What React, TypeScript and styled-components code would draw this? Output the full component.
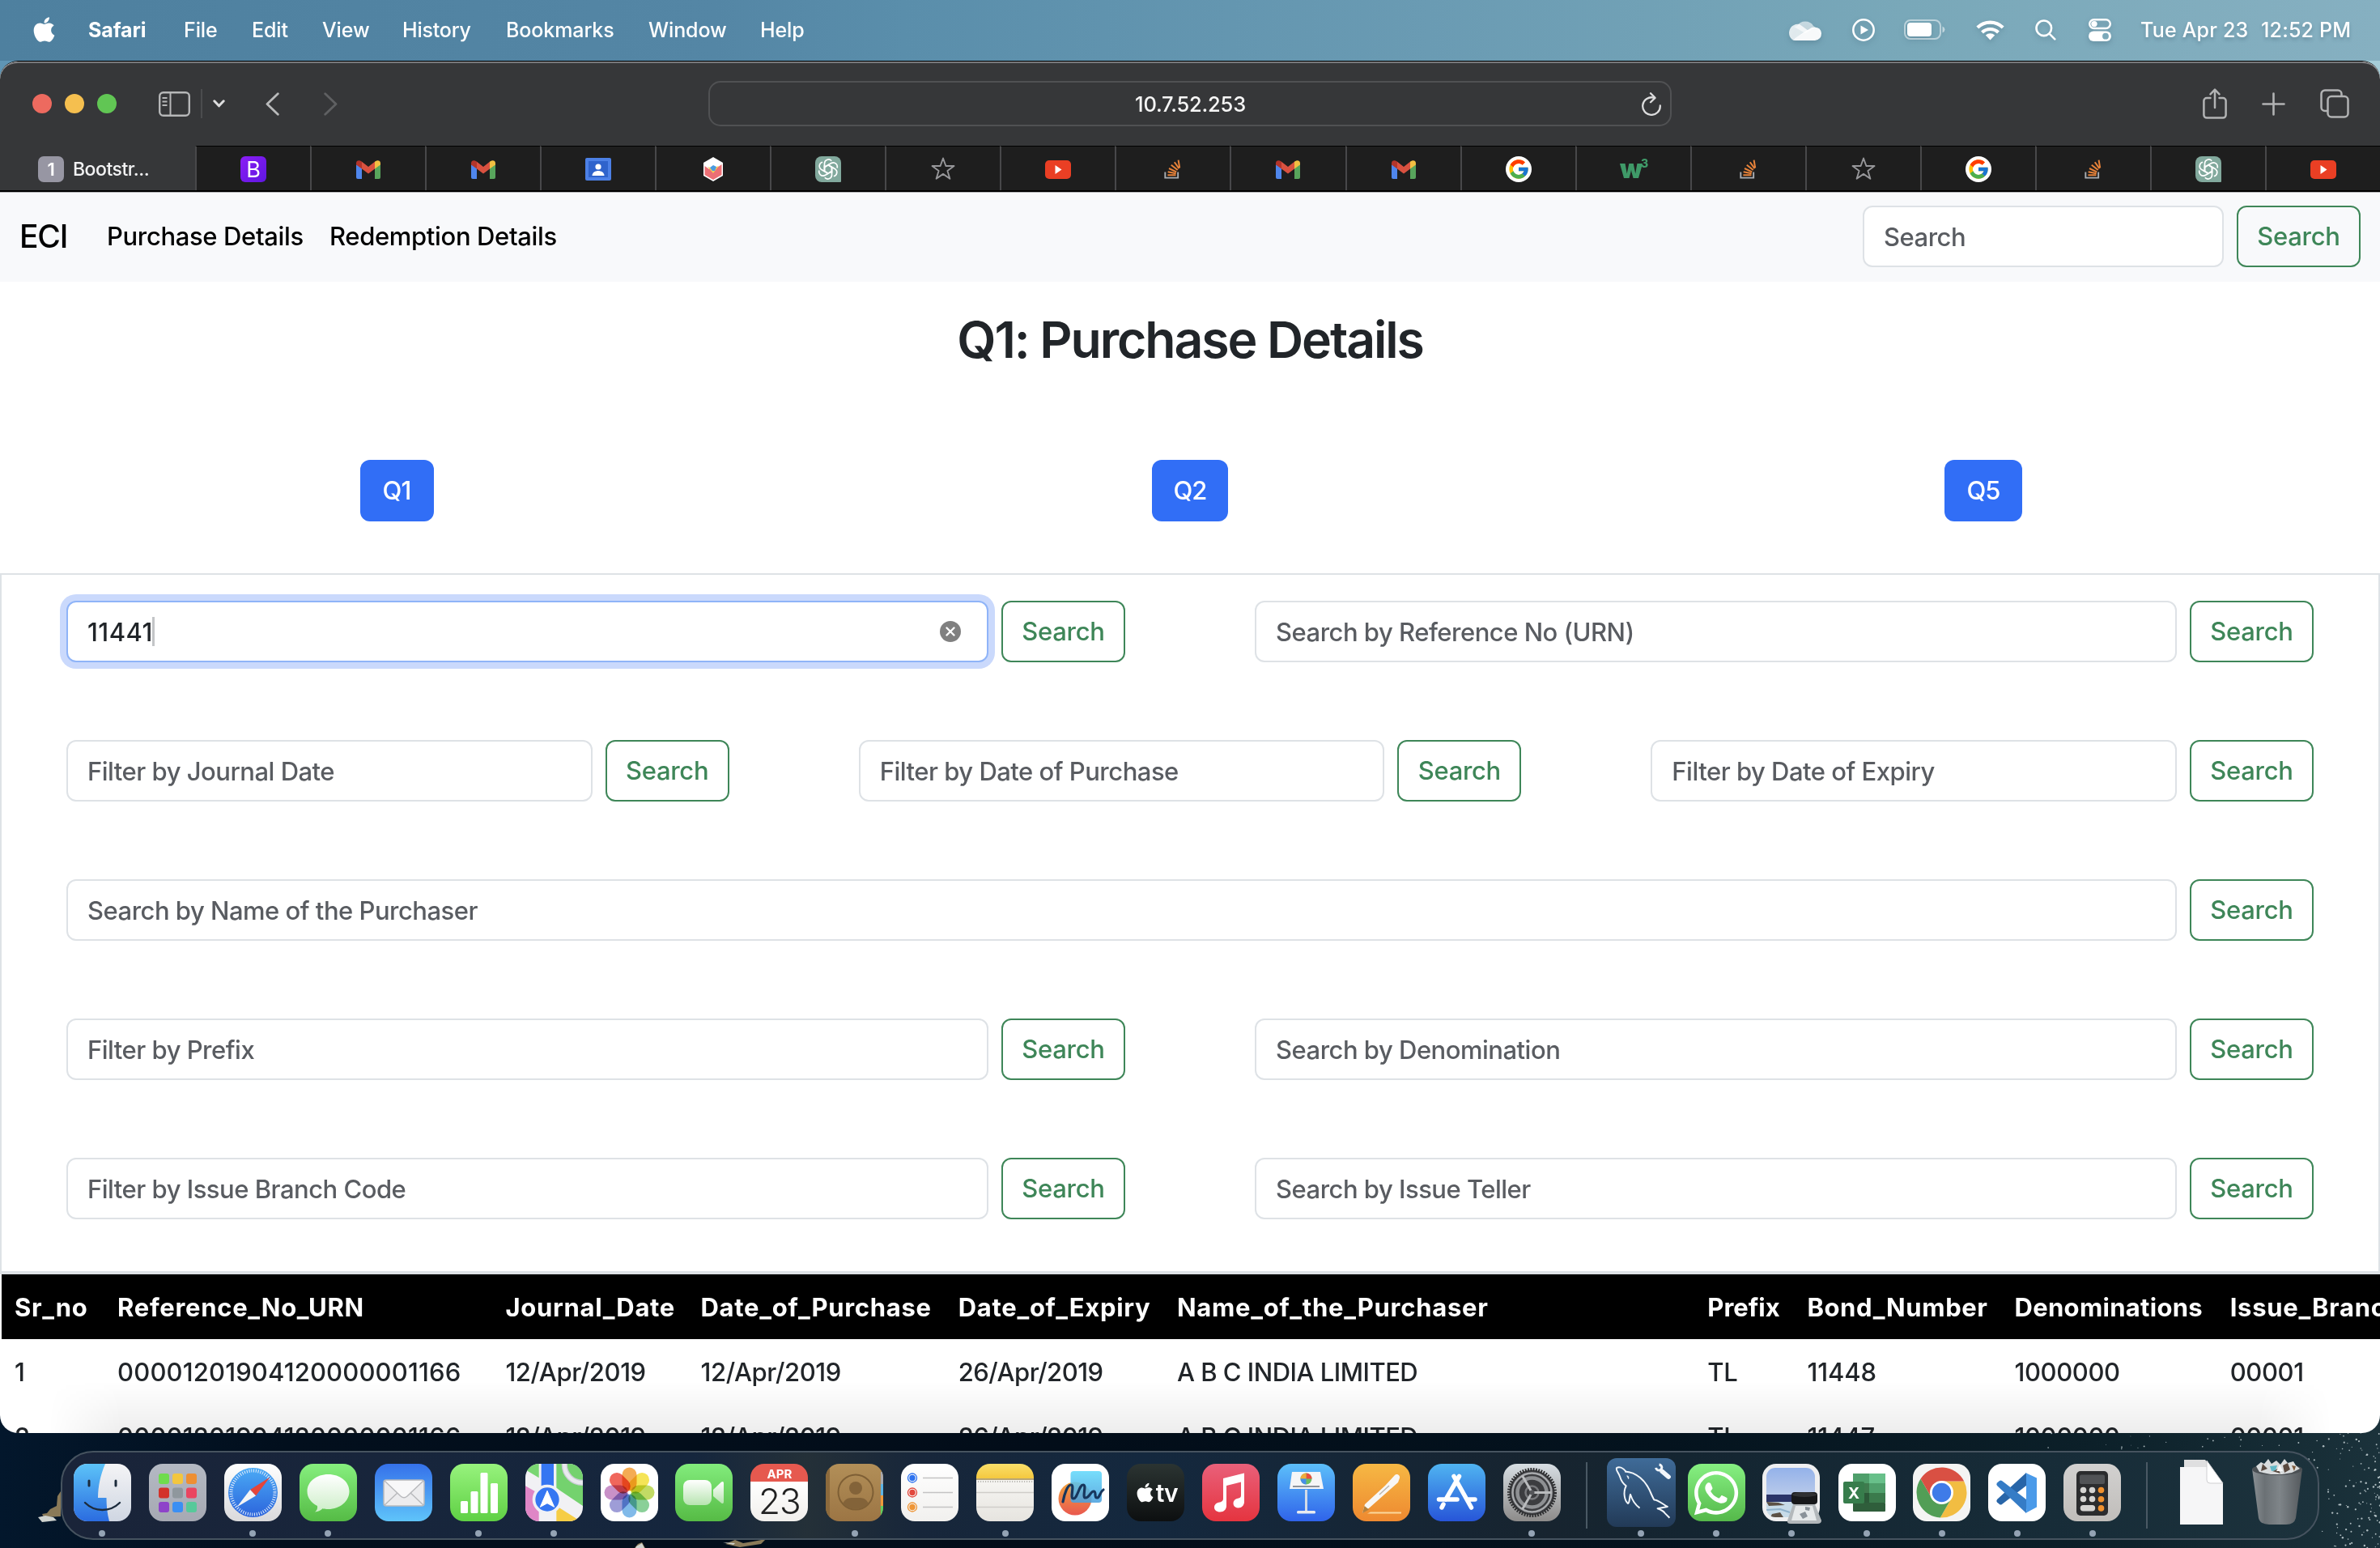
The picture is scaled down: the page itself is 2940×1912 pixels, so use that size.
import React from 'react';
import styled, { createGlobalStyle, css } from 'styled-components';
import { FaApple, FaWhatsapp } from 'react-icons/fa';
import { FcGoogle } from 'react-icons/fc';

const Global = createGlobalStyle`
  * { box-sizing: border-box; }
  html, body { margin: 0; padding: 0; }
  body { width: 2940px; height: 1912px; overflow: hidden; font-family: Inter, "Noto Sans", sans-serif; }
  svg { display: block; }
`;

/* ---------- desktop ---------- */

const Desktop = styled.div`
  position: relative;
  width: 2940px;
  height: 1912px;
  display: flex;
  flex-direction: column;
  overflow: hidden;
  background:
    linear-gradient(90deg, #5f95b5 0%, #6fa6bf 50%, #a5cdd8 100%) top / 100% 200px no-repeat,
    linear-gradient(90deg, #03172c 0%, #020f1d 12%, #020d19 45%, #04131e 70%, #0c2029 88%, #1b323b 100%);
`;

const Wallpaper = styled.svg`
  position: absolute;
  left: 0;
  top: 1770px;
`;

const MenuBar = styled.header`
  height: 75px;
  flex: none;
  display: flex;
  align-items: center;
  justify-content: space-between;
  padding: 0 34px 2px 37px;
  background: linear-gradient(90deg, #4e809f 0%, #5486a5 30%, #5a8eab 38%, #6a9bb3 60%, #79a8b9 80%, #86b0c1 100%);
  color: #fff;
  font-size: 25px;
  font-weight: 500;
  letter-spacing: -0.1px;
`;

const MenuGroup = styled.div`
  display: flex;
  align-items: center;
  white-space: nowrap;
`;

const StatusGroup = styled(MenuGroup)`
  svg { filter: drop-shadow(0 3px 3px rgba(40, 70, 90, 0.25)); }
`;

const MenuItem = styled.span<{ $w: number; $bold?: boolean; $track?: number }>`
  width: ${p => p.$w}px;
  margin-right: 44px;
  font-weight: ${p => (p.$bold ? 700 : 500)};
  letter-spacing: ${p => p.$track ?? -0.1}px;
`;

const Gap = styled.span<{ $w: number }>`
  width: ${p => p.$w}px;
  flex: none;
`;

const Clock = styled.span<{ $w: number; $track: number }>`
  width: ${p => p.$w}px;
  letter-spacing: ${p => p.$track}px;
  text-shadow: 0 3px 4px rgba(40, 70, 90, 0.3);
`;

/* ---------- browser ---------- */

const Browser = styled.main`
  position: relative;
  height: 1695px;
  flex: none;
  display: flex;
  flex-direction: column;
  overflow: hidden;
  border-radius: 22px;
  border-top: 1px solid #000;
  background: #fff;
`;

const Toolbar = styled.div`
  height: 104px;
  flex: none;
  display: flex;
  align-items: center;
  padding: 0 38px 2px 40px;
  background: #363739;
  border-top: 2px solid #77777a;
  border-radius: 22px 22px 0 0;
`;

const Light = styled.span<{ $c: string }>`
  width: 24px;
  height: 24px;
  margin-right: 16px;
  border-radius: 50%;
  background: ${p => p.$c};
`;

const ToolDivider = styled.span`
  width: 2px;
  height: 36px;
  margin: 0 13px;
  background: #4b4c4e;
`;

const Address = styled.div`
  width: 1190px;
  height: 56px;
  display: flex;
  align-items: center;
  justify-content: flex-end;
  padding-right: 10px;
  border: 2px solid #505153;
  border-radius: 15px;
  color: #f5f5f5;
  font-size: 25.5px;
  font-weight: 500;
  letter-spacing: -0.2px;
`;

const AddressText = styled.span`
  flex: 1;
  padding-left: 37px;
  text-align: center;
`;

const Tabs = styled.div`
  height: 57px;
  flex: none;
  display: grid;
  grid-template-columns: 241px repeat(19, 1fr);
  border-bottom: 2px solid #000;
`;

const ActiveTab = styled.div`
  display: flex;
  align-items: center;
  padding: 3px 0 0 47px;
  gap: 11px;
  background: #363739;
  color: #f2f2f3;
  font-size: 23px;
  font-weight: 500;
  letter-spacing: -0.5px;
`;

const CountBadge = styled.span`
  width: 32px;
  height: 32px;
  display: grid;
  place-items: center;
  border-radius: 7px;
  background: #9796a3;
  color: #fff;
  font-weight: 600;
  font-size: 22px;
`;

const Tab = styled.div`
  display: grid;
  place-items: center;
  background: #1e1e1e;
  border-top: 1px solid #000;
  border-left: 2px solid #48484a;
  padding-top: 2px;
`;

const Fav = styled.span<{ $bg: string; $r: string }>`
  width: 32px;
  height: 32px;
  display: grid;
  place-items: center;
  background: ${p => p.$bg};
  border-radius: ${p => p.$r};
  color: #fff;
  font-size: 27px;
  line-height: 1;
`;

const W3 = styled.span`
  display: flex;
  align-items: flex-start;
  color: #3f9a68;
  font: 900 32px/24px Inter, sans-serif;
  letter-spacing: -2px;
  sup { font: 800 14px/12px Inter, sans-serif; margin-top: -1px; }
`;

/* ---------- page ---------- */

const Navbar = styled.nav`
  height: 111px;
  flex: none;
  display: flex;
  align-items: center;
  padding: 0 24px 2px;
  background: #f8f9fb;
  border-top: 1px solid #b5b6b8;
  color: #000;
  font-size: 31px;
  font-weight: 450;
`;

const Brand = styled.span`
  width: 108px;
  padding-bottom: 2px;
  font-size: 39px;
  letter-spacing: -1.2px;
`;

const NavLink = styled.span<{ $w: number }>`
  width: ${p => p.$w}px;
  padding-bottom: 1px;
  letter-spacing: -0.35px;
  white-space: nowrap;
`;

const Spacer = styled.div`
  flex: 1;
`;

const Intro = styled.section`
  height: 360px;
  flex: none;
  display: flex;
  flex-direction: column;
  background: #fff;
`;

const Title = styled.h2`
  margin: 33px 0 110px;
  font-size: 62.5px;
  line-height: 77px;
  font-weight: 600;
  letter-spacing: -2.1px;
  text-align: center;
  color: #212529;
`;

const Questions = styled.div`
  display: grid;
  grid-template-columns: repeat(3, 1fr);
  justify-items: center;
`;

const buttonBase = css`
  height: 76px;
  flex: none;
  display: flex;
  align-items: center;
  justify-content: center;
  border-radius: 12px;
  font: 450 31px/48px Inter, sans-serif;
`;

const Primary = styled.button<{ $w: number }>`
  ${buttonBase}
  width: ${p => p.$w}px;
  padding: 0;
  border: 0;
  background: #316ef6;
  color: #fff;
  letter-spacing: -0.9px;
`;

const Outline = styled.button`
  ${buttonBase}
  width: 153px;
  padding: 0;
  border: 2px solid #3e8658;
  background: transparent;
  color: #3e8658;
  letter-spacing: -0.3px;
`;

const Input = styled.div<{ $w?: number; $focus?: boolean }>`
  height: 76px;
  ${p => (p.$w ? `width: ${p.$w}px; flex: none;` : 'flex: 1;')}
  display: flex;
  align-items: center;
  padding: 0 24px;
  border: 2px solid ${p => (p.$focus ? '#8fb4f8' : '#dee2e6')};
  border-radius: 12px;
  background: #fff;
  color: ${p => (p.$focus ? '#212529' : '#595c61')};
  font-size: 31px;
  font-weight: 450;
  letter-spacing: ${p => (p.$focus ? 0.5 : -0.5)}px;
  white-space: nowrap;
  box-shadow: ${p => (p.$focus ? '0 0 0 8px #cad9fc' : 'none')};
`;

const Caret = styled.span`
  width: 3px;
  height: 36px;
  margin-left: -1px;
  background: #c3c5c7;
`;

const Field = styled.div`
  display: flex;
  gap: 16px;
  padding: 0 80px;
`;

const NavSearch = styled.div`
  display: flex;
  gap: 16px;
`;

const Filters = styled.section`
  height: 866px;
  flex: none;
  display: flex;
  flex-direction: column;
  gap: 96px;
  padding-top: 32px;
  border: 2px solid #dee2e6;
  border-bottom-width: 4px;
  background: #fff;
`;

const FilterRow = styled.div<{ $n: number }>`
  display: grid;
  grid-template-columns: repeat(${p => p.$n}, 1fr);
`;

const Table = styled.table`
  width: 3100px;
  margin-left: 2px;
  flex: none;
  table-layout: fixed;
  border-collapse: collapse;
  font-size: 31px;
  line-height: 48px;
`;

const Th = styled.th<{ $w: number; $track?: number }>`
  width: ${p => p.$w}px;
  height: 80px;
  padding: 17px 16px 15px;
  background: #000;
  color: #fff;
  text-align: left;
  font-weight: 700;
  letter-spacing: ${p => p.$track ?? 0.7}px;
  white-space: nowrap;
`;

const Td = styled.td<{ $track?: number }>`
  height: 80px;
  padding: 17px 16px 15px;
  color: #212529;
  font-weight: 450;
  letter-spacing: ${p => p.$track ?? -0.4}px;
  white-space: nowrap;
`;

const BottomShade = styled.div`
  position: absolute;
  left: 60px;
  right: 60px;
  bottom: 0;
  height: 64px;
  background: linear-gradient(180deg, rgba(0, 0, 0, 0) 0%, rgba(0, 0, 0, 0.07) 100%);
  mask-image: linear-gradient(90deg, transparent 0, #000 90px, #000 calc(100% - 90px), transparent 100%);
`;

/* ---------- dock ---------- */

const DockArea = styled.footer`
  position: relative;
  display: flex;
  padding: 22px 0 0 75px;
`;

const DockBar = styled.div`
  width: 2790px;
  height: 110px;
  display: flex;
  align-items: flex-start;
  padding: 0 0 0 3px;
  border: 2px solid #46535f;
  border-radius: 40px;
  background: linear-gradient(90deg, #1a2439 0%, #15263d 28%, #243038 33%, #17263a 38%, #14283e 48%, #17242f 66%, #142531 72%, #172c38 88%, #1c323c 100%);
  overflow: hidden;
`;

const Slot = styled.div`
  width: 92.95px;
  height: 106px;
  flex: none;
  display: flex;
  flex-direction: column;
  align-items: center;
  justify-content: space-between;
  padding: 14px 0 4px;
`;

const Dot = styled.span<{ $on?: boolean }>`
  width: 8px;
  height: 8px;
  margin-bottom: -2px;
  border-radius: 50%;
  background: ${p => (p.$on ? '#94a3b4' : 'transparent')};
`;

const Tile = styled.div<{ $bg: string; $size?: number }>`
  position: relative;
  width: ${p => p.$size ?? 71}px;
  height: ${p => p.$size ?? 71}px;
  margin: ${p => (p.$size ? '-7px' : '0')};
  flex: none;
  overflow: hidden;
  display: flex;
  align-items: center;
  justify-content: center;
  border-radius: ${p => (p.$size ? 12 : 17)}px;
  background: ${p => p.$bg};
  color: #fff;
`;

const Bare = styled.div`
  width: 80px;
  height: 86px;
  margin-top: -7px;
  display: flex;
  justify-content: center;
`;

const DockDivider = styled.span`
  width: 2px;
  height: 82px;
  margin: 12px 20px 0;
  flex: none;
  background: #4a5964;
`;

const CalendarFace = styled.div`
  width: 71px;
  height: 71px;
  display: grid;
  grid-template-rows: 22px 1fr;
  text-align: center;
  font-size: 15px;
  line-height: 25px;
  font-weight: 700;
  background: linear-gradient(180deg, #e6594f 22px, #fff 22px, #f1efec);
`;

const CalendarDay = styled.span`
  color: #222;
  font: 300 44px/48px Inter, sans-serif;
  letter-spacing: -1px;
`;

const TvFace = styled.span`
  display: flex;
  align-items: center;
  font: 600 30px/30px Inter, sans-serif;
  letter-spacing: -1px;
`;

/* ---------- icons ---------- */

const Gmail = () => (
  <svg width="30" height="23" viewBox="0 0 30 23">
    <path d="M0 5L7 9V23H2a2 2 0 0 1-2-2Z" fill="#4f86ec" />
    <path d="M30 5L23 9V23h5a2 2 0 0 0 2-2Z" fill="#58a55c" />
    <path d="M0 3.5C0 .2 3.8-1 7 1.8V10.5L0 5.4Z" fill="#b3352b" />
    <path d="M30 3.5C30 .2 26.200-1 23 1.8V10.500L30 5.400Z" fill="#f2bf42" />
    <path d="M7 1.800L15 8L23 1.800V10.500L15 16.500L7 10.500Z" fill="#d95140" />
  </svg>
);

const Classroom = () => (
  <svg width="32" height="28" viewBox="0 0 32 28">
    <rect width="32" height="28" rx="2" fill="#4c80e6" />
    <rect x="4" y="4" width="24" height="20" fill="#2f63cc" />
    <circle cx="16" cy="11" r="3.600" fill="#fff" />
    <path d="M8.500 22c0-4 4-6 7.500-6s7.500 2 7.500 6Z" fill="#fff" />
  </svg>
);

const ChartHex = () => (
  <svg width="28" height="32" viewBox="0 0 28 32">
    <path d="M14 1L26 8V24L14 31L2 24V8Z" fill="#fff" />
    <path d="M3.500 12L9 16l10-2 5.500-4V23L14 29L3.500 23Z" fill="#ec6f75" />
    <path d="M7 13l7 8 7-9-3 1-4 4-4-3Z" fill="#f3cb55" />
    <path d="M10 14l4-3 4 2-2 5h-3Z" fill="#4a9be0" />
  </svg>
);

const OpenAI = () => (
  <Fav $bg="#82a99d" $r="8px 8px 1px 8px">
    <svg width="26" height="26" viewBox="-13 -13 26 26" fill="none" stroke="#fff" strokeWidth="1.700" strokeLinejoin="round">
      {[0, 60, 120, 180, 240, 300].map(a => (
        <path key={a} transform={`rotate(${a})`} d="M-4.500 -2.600V-7.500A5 5 0 0 1 4.200 -10.300M-4.500 -2.600L0 -5.200L6.500 -1.500" />
      ))}
    </svg>
  </Fav>
);

const Star = () => (
  <svg width="32" height="32" viewBox="0 0 32 32" fill="none" stroke="#97979a" strokeWidth="1.900" strokeLinejoin="round">
    <path d="M16 2.500L19.400 12H29.500L21.400 18L24.400 27.800L16 21.900L7.600 27.800L10.600 18L2.500 12H12.600Z" />
  </svg>
);

const YouTube = () => (
  <svg width="32" height="23" viewBox="0 0 32 23">
    <rect width="32" height="23" rx="5" fill="#ea3f24" />
    <path d="M12.500 6L20.500 11.500L12.500 17Z" fill="#fff" />
  </svg>
);

const StackOverflow = () => (
  <svg width="22" height="25" viewBox="0 0 25 28" fill="none">
    <path d="M1.500 17.500V25.500H19.500V17.500" stroke="#a9adb2" strokeWidth="2.200" />
    <g stroke="#e8833a" strokeWidth="2.300">
      <path d="M5 21.600H16.500" />
      <path d="M5.300 17L16.700 19.300" />
      <path d="M6.800 12.300L17.300 17.200" />
      <path d="M10 7.500L19 14.600" />
      <path d="M14.500 3.500L21 12.500" />
      <path d="M20 .5L21.800 11.500" />
    </g>
  </svg>
);

const Google = () => (
  <Fav $bg="#fff" $r="50%">
    <FcGoogle size={28} />
  </Fav>
);

const favicons: Record<string, () => React.ReactElement> = {
  bootstrap: () => <Fav $bg="linear-gradient(135deg,#8b1df5,#5f17e0)" $r="6px">B</Fav>,
  gmail: Gmail,
  classroom: Classroom,
  chart: ChartHex,
  gpt: OpenAI,
  star: Star,
  youtube: YouTube,
  stack: StackOverflow,
  google: Google,
  w3: () => <W3>w<sup>3</sup></W3>,
};

const tabOrder = [
  'bootstrap', 'gmail', 'gmail', 'classroom', 'chart', 'gpt', 'star', 'youtube', 'stack', 'gmail',
  'gmail', 'google', 'w3', 'stack', 'star', 'google', 'stack', 'gpt', 'youtube',
];

const Finder = () => (
  <Tile $bg="linear-gradient(180deg,#f4f4f6,#cfd6e2)">
    <svg width="71" height="71" viewBox="0 0 71 71" fill="none">
      <defs>
        <linearGradient id="finderBlue" x1="0" y1="0" x2="0" y2="1">
          <stop offset="0" stopColor="#5cc3f8" />
          <stop offset="1" stopColor="#2b6ce0" />
        </linearGradient>
      </defs>
      <path d="M0 0H39C33 14 30 28 30 42H40.500C40.500 52 41.500 62 44 71H0Z" fill="url(#finderBlue)" />
      <path d="M19 21V27M52 21V27" stroke="#1c2b3c" strokeWidth="3" strokeLinecap="round" />
      <path d="M14 48C26 60 45 60 57 48" stroke="#1c2b3c" strokeWidth="2.400" strokeLinecap="round" />
    </svg>
  </Tile>
);

const padColors = ['#6fdc4e', '#f3c63f', '#ee8f33', '#d3322a', '#8f979d', '#ea4560', '#8e43c9', '#3b8ff3', '#57c99a'];
const Launchpad = () => (
  <Tile $bg="linear-gradient(180deg,#b4b9c3,#a6a9b3)">
    <svg width="71" height="71" viewBox="0 0 71 71">
      {padColors.map((c, i) => (
        <rect key={c} x={12 + (i % 3) * 17} y={12 + Math.floor(i / 3) * 17.500} width="13" height="13" rx="3" fill={c} />
      ))}
    </svg>
  </Tile>
);

const Safari = () => (
  <Tile $bg="linear-gradient(180deg,#fff,#d9d9db)">
    <svg width="71" height="71" viewBox="-35.500 -35.500 71 71">
      <defs>
        <linearGradient id="safariBlue" x1="0" y1="0" x2="0" y2="1">
          <stop offset="0" stopColor="#4aaaf5" />
          <stop offset="1" stopColor="#2c64dc" />
        </linearGradient>
      </defs>
      <circle r="30.500" fill="url(#safariBlue)" />
      <circle r="27" fill="none" stroke="#e5eefb" strokeWidth="4" strokeDasharray="1 1.830" />
      <path d="M21 -19L3.500 4L-3.500 -3.500Z" fill="#e5453a" />
      <path d="M-20 18L-3.500 -3.500L3.500 4Z" fill="#f4f4f6" />
    </svg>
  </Tile>
);

const Messages = () => (
  <Tile $bg="linear-gradient(180deg,#86ef7e,#55bb45)">
    <svg width="71" height="71" viewBox="0 0 71 71">
      <defs>
        <linearGradient id="bubble" x1="0" y1="0" x2="0" y2="1">
          <stop offset="0" stopColor="#fff" />
          <stop offset="1" stopColor="#cdeec8" />
        </linearGradient>
      </defs>
      <path d="M35.500 13C50 13 61.500 22 61.500 34S50 56 35.500 56C33 56 30.500 55.800 28.500 55.200C26 58 22.500 59 19 59.500C21.500 57.500 22.500 55 22 52C14.500 48 9.500 42 9.500 34C9.500 22 21 13 35.500 13Z" fill="url(#bubble)" />
    </svg>
  </Tile>
);

const Mail = () => (
  <Tile $bg="linear-gradient(180deg,#3571ea,#5fc4fa)">
    <svg width="71" height="71" viewBox="0 0 71 71" stroke="#b9babd" strokeWidth="1.500" strokeLinejoin="round">
      <rect x="11" y="20" width="50" height="32" rx="3" fill="#ececee" />
      <path d="M12 51L30 34M60 51L42 34" fill="none" />
      <path d="M12 21L32 40Q36 43.500 40 40L60 21" fill="#f8f8f9" />
    </svg>
  </Tile>
);

const Numbers = () => (
  <Tile $bg="linear-gradient(180deg,#97f37d,#5fd044)">
    <svg width="71" height="71" viewBox="0 0 71 71" fill="#fff">
      <rect x="13" y="46" width="9" height="15" rx="1.500" />
      <rect x="25.500" y="34" width="9" height="27" rx="1.500" />
      <rect x="37.500" y="11" width="9" height="50" rx="1.500" />
      <rect x="50" y="24" width="9" height="37" rx="1.500" />
    </svg>
  </Tile>
);

const Maps = () => (
  <Tile $bg="#f1f1f4">
    <svg width="71" height="71" viewBox="25 40 213 213">
      <path d="M40 40H75V92L25 62V40Z" fill="#79d672" />
      <path d="M140 40H238V196L140 130Z" fill="#74d26e" />
      <path d="M25 122L75 150V253H25Z" fill="#df86c6" />
      <path d="M140 196L230 253H140Z" fill="#f6cd45" />
      <circle cx="236" cy="44" r="66" fill="none" stroke="#c9ccd3" strokeWidth="22" />
      <circle cx="236" cy="44" r="66" fill="none" stroke="#e9eaee" strokeWidth="14" />
      <rect x="84" y="40" width="46" height="100" fill="#3576f2" />
      <circle cx="106" cy="172" r="55" fill="#f0f1f5" />
      <circle cx="106" cy="172" r="44" fill="#3576f2" />
      <path d="M106 140L132 200L106 186L80 200Z" fill="#fff" stroke="#fff" strokeWidth="3" strokeLinejoin="round" />
    </svg>
  </Tile>
);

const Petal = styled.rect`
  mix-blend-mode: multiply;
`;

const petals = ['#f3a13c', '#f4e040', '#b9d64e', '#7ac98a', '#70b0e6', '#918fd2', '#c182c0', '#ee5246'];
const Photos = () => (
  <Tile $bg="#fff">
    <svg width="71" height="71" viewBox="-35.500 -35.500 71 71">
      {petals.map((c, i) => (
        <Petal key={c} x="-9" y="-31" width="18" height="29" rx="9" fill={c} fillOpacity=".88" transform={`rotate(${i * 45})`} />
      ))}
      <circle r="1.600" fill="#fff" />
    </svg>
  </Tile>
);

const FaceTime = () => (
  <Tile $bg="linear-gradient(180deg,#82ec7c,#56bb45)">
    <svg width="71" height="71" viewBox="0 0 71 71">
      <defs>
        <linearGradient id="cam" x1="0" y1="0" x2="0" y2="1">
          <stop offset="0" stopColor="#fff" />
          <stop offset="1" stopColor="#b7e4b0" />
        </linearGradient>
      </defs>
      <rect x="10" y="20" width="35" height="31" rx="8" fill="url(#cam)" />
      <path d="M47 32L57 22.500Q60 21 60 24V47Q60 50 57 48.500L47 40Z" fill="url(#cam)" />
    </svg>
  </Tile>
);

const Contacts = () => (
  <Tile $bg="linear-gradient(180deg,#b28f58,#9c7544)">
    <svg width="71" height="71" viewBox="0 0 71 71" fill="none">
      <rect width="5" height="71" fill="#8c6a3c" />
      <path d="M68 10H71V25H68Z" fill="#a9a9ad" />
      <path d="M68 25H71V39H68Z" fill="#5cb4e6" />
      <path d="M68 39H71V52H68Z" fill="#f09a3c" />
      <path d="M68 52H71V64H68Z" fill="#62cf5e" />
      <circle cx="37" cy="35" r="21.500" stroke="#7e5f35" strokeWidth="2" />
      <circle cx="37" cy="30" r="8" fill="#836339" />
      <path d="M21 49C25 41 31 42 37 42S49 41 53 49C45 58 29 58 21 49Z" fill="#836339" />
    </svg>
  </Tile>
);

const Reminders = () => (
  <Tile $bg="linear-gradient(180deg,#fff,#f1f0ee)">
    <svg width="71" height="71" viewBox="0 0 71 71">
      {['#2f74f0', '#e2483d', '#ef9636'].map((c, i) => (
        <g key={c} transform={`translate(14 ${17.500 + i * 18})`}>
          <circle r="5.500" fill="none" stroke={c} strokeWidth="1.300" />
          <circle r="3.700" fill={c} />
          <path d="M13 0H50" stroke="#c4c3c4" strokeWidth="1.600" />
        </g>
      ))}
    </svg>
  </Tile>
);

const Notes = () => (
  <Tile $bg="linear-gradient(180deg,#fae06a 0,#f5c83f 18px,#f7f6f3 18px,#e6e4df 100%)">
    <svg width="71" height="71" viewBox="0 0 71 71" fill="none">
      <path d="M0 19H71" stroke="#b9a675" strokeWidth="2" />
      <path d="M2 22H71" stroke="#bcbab5" strokeWidth="2" strokeDasharray="1.200 1.800" />
      <path d="M0 35.500H71M0 53.500H71" stroke="#cfcdc9" strokeWidth="1.500" />
    </svg>
  </Tile>
);

const Freeform = () => (
  <Tile $bg="#fff">
    <svg width="71" height="71" viewBox="0 0 71 71" fill="none">
      <defs>
        <linearGradient id="ffOrange" x1="0" y1="0" x2="0" y2="1">
          <stop offset="0" stopColor="#f3a53e" />
          <stop offset="1" stopColor="#e9584f" />
        </linearGradient>
        <linearGradient id="ffBlue" x1="0" y1="0" x2="0" y2="1">
          <stop offset="0" stopColor="#63d9fb" />
          <stop offset="1" stopColor="#4ba0dd" />
        </linearGradient>
      </defs>
      <circle cx="29" cy="43" r="20.500" fill="url(#ffOrange)" />
      <rect x="23.500" y="9" width="38.500" height="39" rx="4" fill="url(#ffBlue)" fillOpacity=".88" />
      <path d="M14 47C16 36 20 26 24 26C29 26 22 43 27 43C32 43 34 26 39 26C44 26 37 42 42 42C47 42 48 34 52 34C56 34 52 42 56 42C60 42 59 35 64 32" stroke="#17365d" strokeWidth="3.200" strokeLinecap="round" />
    </svg>
  </Tile>
);

const Music = () => (
  <Tile $bg="linear-gradient(180deg,#e9607a,#e5343f)">
    <svg width="71" height="71" viewBox="0 0 71 71" fill="#fff">
      <path d="M26 18L52 11.500V47C52 51 49 54.500 44.500 54.500C41 54.500 38.500 52 38.500 49C38.500 45.500 41 43.500 44 42.800C47 42 48 41.500 48 39V22.500L30 27V52C30 56 27 59.500 22 59.500C18 59.500 15 57 15 54C15 50.500 17.500 48.500 20.500 47.800C24 47 26 46 26 43.500Z" />
    </svg>
  </Tile>
);

const Keynote = () => (
  <Tile $bg="linear-gradient(180deg,#5cbffa,#2f63ea)">
    <svg width="71" height="71" viewBox="0 0 71 71">
      <path d="M18 10H53L57 31H15Z" fill="#f5f5f7" />
      <path d="M19 27H52V29H19Z" fill="#8e939c" />
      <circle cx="35.500" cy="18.500" r="7" fill="#6dbf63" />
      <path d="M35.500 18.500V11.500A7 7 0 0 1 42.500 18.500Z" fill="#e94e3f" />
      <path d="M35.500 18.500V11.500A7 7 0 0 0 28.500 18.500Z" fill="#f1ab3c" />
      <path d="M35.500 18.500H28.500A7 7 0 0 0 35.500 25.500Z" fill="#488fe8" />
      <path d="M34 32H37V59H34Z" fill="#d3dbe8" />
      <rect x="24" y="58" width="23" height="3.500" rx="1.500" fill="#e8ebf1" />
    </svg>
  </Tile>
);

const Pages = () => (
  <Tile $bg="linear-gradient(180deg,#f6b844,#ee8930)">
    <svg width="71" height="71" viewBox="0 0 71 71">
      <path d="M22 59.500H60V61.500H18Z" fill="#fbd79c" />
      <path d="M52 14C54 11.500 59 14 58 17.500L56 23L21 54L12 61L15 50L40 27Z" fill="#f8f6f4" />
      <path d="M12 61L14.500 52L20 56.500Z" fill="#b4813d" />
      <path d="M45 27L33 38" stroke="#b9b4ae" strokeWidth="1.400" />
    </svg>
  </Tile>
);

const AppStore = () => (
  <Tile $bg="linear-gradient(180deg,#4fb4f1,#2755d8)">
    <svg width="71" height="71" viewBox="0 0 71 71" fill="none" stroke="#fff" strokeWidth="5.500" strokeLinecap="round">
      <path d="M38.500 15.500L22 44M32 15.500L53.500 54M13.500 44H36M49 44H58M19 50L17 54" />
    </svg>
  </Tile>
);

const Settings = () => (
  <Tile $bg="linear-gradient(180deg,#d7dee3,#8d8b8a)">
    <svg width="71" height="71" viewBox="-35.500 -35.500 71 71" fill="none">
      <circle r="28" fill="#3c3d40" />
      <circle r="28.500" stroke="#2c2d2f" strokeWidth="4" strokeDasharray="1.800 1.500" />
      <circle r="24" stroke="#a8aaad" strokeWidth="2.500" />
      <circle r="18" stroke="#8e9093" strokeWidth="4.500" />
      <circle r="8" stroke="#78797c" strokeWidth="2.500" />
      <g stroke="#b9bbbd" strokeWidth="3">
        <path d="M0 0H24M0 0L-12 -20.800M0 0L-12 20.800" />
      </g>
      <circle r="3" fill="#55565a" />
    </svg>
  </Tile>
);

const Workbench = () => (
  <Tile $size={85} $bg="linear-gradient(180deg,#3f6b98,#223a57)">
    <svg width="85" height="85" viewBox="45 18 258 258" fill="none" stroke="#f2f6fa" strokeWidth="6" strokeLinejoin="round">
      <path d="M116 68C106 54 92 50 82 54C76 62 90 74 94 88C98 102 106 114 117 122C104 148 112 178 124 188C132 182 128 168 133 154C140 176 152 194 168 205" />
      <path d="M112 68C158 70 190 106 205 138C212 154 216 164 222 174C238 174 256 192 272 200L235 207C248 212 258 216 262 224L280 242" />
      <path d="M120 84C126 84 128 90 126 96Z" fill="#f2f6fa" strokeWidth="2" />
      <path d="M252 68L276 88" strokeWidth="17" strokeLinecap="round" />
      <path d="M229 54A11 11 0 1 0 241 42" strokeWidth="9" />
    </svg>
  </Tile>
);

const Preview = () => (
  <Bare>
    <svg width="80" height="80" viewBox="-4 -7 80 80" overflow="visible">
      <defs>
        <linearGradient id="pvSky" x1="0" y1="0" x2="0" y2="1">
          <stop offset="0" stopColor="#94b2ea" />
          <stop offset="1" stopColor="#b9caea" />
        </linearGradient>
        <clipPath id="pvClip"><rect x="5" y="5" width="60" height="61" rx="11" /></clipPath>
      </defs>
      <rect width="71" height="71" rx="17" fill="#efeff0" />
      <g clipPath="url(#pvClip)">
        <rect x="5" y="5" width="60" height="34" fill="url(#pvSky)" />
        <rect x="5" y="38" width="60" height="9" fill="#2b3468" />
        <rect x="5" y="47" width="60" height="20" fill="#c7dbe8" />
        <path d="M5 47L20 48L28 51L8 52ZM12 62L22 60L26 66H10Z" fill="#5c5145" />
        <path d="M5 57L22 56L34 60" stroke="#8fb2cc" strokeWidth="2" fill="none" />
      </g>
      <path d="M38 50H65L73 70Q73 74 68 74H35Q30 74 31 70Z" fill="#b3b8bb" />
      <path d="M41 52H62L67 70H36Z" fill="#e6e9ea" />
      <path d="M46 62l7-3 3 6-6 3ZM53 53l6 1-1 4-5-1Z" fill="#8a9299" />
      <rect x="36" y="35" width="32" height="15" rx="4" fill="#17181a" />
      <ellipse cx="52" cy="38" rx="15" ry="3" fill="#303133" />
    </svg>
  </Bare>
);

const Excel = () => (
  <Tile $bg="#fff">
    <svg width="71" height="71" viewBox="0 0 71 71">
      <rect x="18" y="12" width="20" height="12" fill="#4f9f6b" />
      <rect x="38" y="12" width="20" height="12" fill="#68c08a" />
      <rect x="18" y="24" width="20" height="12" fill="#3f7b4e" />
      <rect x="38" y="24" width="20" height="12" fill="#4f9f6b" />
      <rect x="18" y="36" width="20" height="12" fill="#2c5a39" />
      <rect x="38" y="36" width="20" height="12" fill="#3b7a4c" />
      <rect x="18" y="48" width="40" height="11" rx="1" fill="#2f5e3b" />
      <rect x="6" y="22" width="26" height="27" rx="2" fill="#377d4c" />
      <text x="19" y="42.500" textAnchor="middle" fontFamily="Inter" fontWeight="700" fontSize="19" fill="#fff">X</text>
    </svg>
  </Tile>
);

const Chrome = () => (
  <Tile $bg="#f4f4f3">
    <svg width="71" height="71" viewBox="0.500 0.500 71 71">
      {[['#f2bd42', 0], ['#529e56', 120], ['#d95043', 240]].map(([c, a]) => (
        <path key={c} d="M36 22L63.660 22A31 31 0 0 1 34.290 66.950L48.120 43L36 36Z" fill={String(c)} transform={`rotate(${a} 36 36)`} />
      ))}
      <circle cx="36" cy="36" r="14.500" fill="#fff" />
      <circle cx="36" cy="36" r="11.700" fill="#3f7be8" />
    </svg>
  </Tile>
);

const VSCode = () => (
  <Tile $bg="#fff">
    <svg width="71" height="71" viewBox="0 0 71 71">
      <path d="M47 11L11 44Q9.500 46 11 47.500L14 50Q15.500 51 17 50L47 27Z" fill="#2865a8" />
      <path d="M47 61L11 27Q9.500 25 11 23.500L14 21Q15.500 20 17 21L47 44Z" fill="#357cc6" />
      <path d="M46 11L60 17.500V53.500L46 61Q48 58 47 55V16Q48 13 46 11Z" fill="#4a9ae9" />
    </svg>
  </Tile>
);

const Calculator = () => (
  <Tile $bg="linear-gradient(180deg,#d2d1d0,#c0bdba)">
    <svg width="71" height="71" viewBox="0 0 71 71">
      <rect x="16" y="9" width="39" height="55" rx="5" fill="#2b2c2e" />
      <rect x="20" y="13.500" width="31" height="11.500" rx="2" fill="#515356" />
      {[0, 1].map(r => [0, 1].map(c => <circle key={`${r}${c}`} cx={24.500 + c * 11} cy={32.500 + r * 11} r="3.800" fill="#d5d4d2" />))}
      {[0, 1, 2].map(r => <circle key={r} cx="46.500" cy={32.500 + r * 11.200} r="3.800" fill="#f0912f" />)}
      <rect x="20.700" y="51" width="18.500" height="7.500" rx="3.700" fill="#d5d4d2" />
    </svg>
  </Tile>
);

const PaperStack = () => (
  <Bare>
    <svg width="56" height="84" viewBox="0 0 56 84">
      <path d="M6 2H32L52 28V40H6Z" fill="#dfdfe0" />
      <path d="M1 11H34L54 31V82H1Z" fill="#f6f6f7" />
      <path d="M34 3V27Q34 31 38 31H54Z" fill="#fff" stroke="#cfcfd1" strokeWidth="1" />
    </svg>
  </Bare>
);

const Trash = () => (
  <Bare>
    <svg width="64" height="84" viewBox="0 0 64 84">
      <defs>
        <linearGradient id="can" x1="0" y1="0" x2="1" y2="0">
          <stop offset="0" stopColor="#8a9094" />
          <stop offset=".25" stopColor="#6b7175" />
          <stop offset=".55" stopColor="#7f8589" />
          <stop offset="1" stopColor="#54595d" />
        </linearGradient>
      </defs>
      <path d="M1 13Q32 26 63 13L55 74Q53 82 43 82H22Q11 82 9 74Z" fill="url(#can)" />
      <ellipse cx="32" cy="14" rx="31" ry="7" fill="#4b5054" />
      <path d="M6 10L12 5L16 7L21 1L25 7L31 3L36 8L41 1L45 6L52 4L55 9L60 13L50 18L38 20H24L10 17Z" fill="#d9dcdd" />
      <path d="M14 7L20 13L12 16ZM39 9L45 6L48 14L41 18ZM26 16L33 13L36 19Z" fill="#5a4a40" />
      <path d="M23 10L32 9L30 15L25 16Z" fill="#63b9c8" />
      <path d="M31 16L35 8L39 16Z" fill="#f7f7f7" />
      <path d="M50 9L55 10L53 16Z" fill="#7c5a3c" />
    </svg>
  </Bare>
);

type App = { id: string; icon: React.ReactElement; on?: boolean };

const apps: App[] = [
  { id: 'finder', icon: <Finder />, on: true },
  { id: 'launchpad', icon: <Launchpad /> },
  { id: 'safari', icon: <Safari />, on: true },
  { id: 'messages', icon: <Messages />, on: true },
  { id: 'mail', icon: <Mail /> },
  { id: 'numbers', icon: <Numbers />, on: true },
  { id: 'maps', icon: <Maps />, on: true },
  { id: 'photos', icon: <Photos /> },
  { id: 'facetime', icon: <FaceTime /> },
  { id: 'calendar', icon: <Tile $bg="#fff"><CalendarFace>APR<CalendarDay>23</CalendarDay></CalendarFace></Tile> },
  { id: 'contacts', icon: <Contacts />, on: true },
  { id: 'reminders', icon: <Reminders /> },
  { id: 'notes', icon: <Notes />, on: true },
  { id: 'freeform', icon: <Freeform /> },
  { id: 'tv', icon: <Tile $bg="linear-gradient(180deg,#2b3432,#0d0f10)"><TvFace><FaApple size={27} />tv</TvFace></Tile> },
  { id: 'music', icon: <Music /> },
  { id: 'keynote', icon: <Keynote /> },
  { id: 'pages', icon: <Pages /> },
  { id: 'appstore', icon: <AppStore /> },
  { id: 'settings', icon: <Settings />, on: true },
];

const recent: App[] = [
  { id: 'workbench', icon: <Workbench />, on: true },
  { id: 'whatsapp', icon: <Tile $bg="linear-gradient(180deg,#86f082,#55b84a)"><FaWhatsapp size={62} /></Tile>, on: true },
  { id: 'preview', icon: <Preview />, on: true },
  { id: 'excel', icon: <Excel />, on: true },
  { id: 'chrome', icon: <Chrome />, on: true },
  { id: 'vscode', icon: <VSCode />, on: true },
  { id: 'calculator', icon: <Calculator />, on: true },
];

const DockSlots = ({ items }: { items: App[] }) => (
  <>
    {items.map(a => (
      <Slot key={a.id}>
        {a.icon}
        <Dot $on={a.on} />
      </Slot>
    ))}
  </>
);

/* Seeded scatter of surf highlights along the right edge. */
const noise = (n: number) => {
  const s = Math.sin(n * 127.1 + 31.7) * 43758.5453;
  return s - Math.floor(s);
};

const foam = Array.from({ length: 120 }, (_, i) => ({
  x: 2940 - noise(i) ** 1.6 * 90,
  y: noise(i + 400) * 142,
  r: 0.5 + noise(i + 900) * 0.8,
}));

const strayFoam = Array.from({ length: 22 }, (_, i) => ({
  x: 2530 + noise(i + 50) * 330,
  y: noise(i + 700) * 20,
  r: 0.4 + noise(i + 300) * 0.6,
}));

const Backdrop = () => (
  <Wallpaper width="2940" height="142" viewBox="0 0 2940 142">
    <g fill="#8a7a58">
      <path d="M75 72L71 78L70 90L62 94L58 99L52 100L54 104L75 103Z" />
      <path d="M784 142L788 137L793 135L797 142ZM896 137L908 132L918 136L930 134L946 131L940 137L914 141Z" />
    </g>
    <g fill="#cfd3cf">
      <path d="M47 104L56 102L66 104L70 108L52 110ZM786 140L793 136L796 142H785ZM893 135L908 136L906 138Z" />
    </g>
    {[...foam, ...strayFoam].map((f, i) => <circle key={i} cx={f.x} cy={f.y} r={f.r} fill="#dfe9ec" fillOpacity=".75" />)}
  </Wallpaper>
);

const Search = ({ label }: { label: string }) => (
  <Field>
    <Input>{label}</Input>
    <Outline>Search</Outline>
  </Field>
);

const columns: [string, number, number?][] = [
  ['Sr_no', 127], ['Reference_No_URN', 479], ['Journal_Date', 241], ['Date_of_Purchase', 318], ['Date_of_Expiry', 270],
  ['Name_of_the_Purchaser', 655, 0.75], ['Prefix', 123, 0], ['Bond_Number', 256, 0.6], ['Denominations', 266, 0.3], ['Issue_Branch_Code', 363],
];

const cellTrack = [0, 0.15, -0.4, -0.4, -0.5, -0.5, -0.4, -0.1, -0.4, -0.4];

const rows = [
  ['1', '00001201904120000001166', '12/Apr/2019', '12/Apr/2019', '26/Apr/2019', 'A B C INDIA LIMITED', 'TL', '11448', '1000000', '00001'],
  ['2', '00001201904120000001166', '12/Apr/2019', '12/Apr/2019', '26/Apr/2019', 'A B C INDIA LIMITED', 'TL', '11447', '1000000', '00001'],
];

export default function App() {
  return (
    <Desktop>
      <Global />
      <Backdrop />
      <MenuBar>
        <MenuGroup>
          <FaApple size={35} />
          <Gap $w={37} />
          <MenuItem $w={74} $bold>Safari</MenuItem>
          <MenuItem $w={40}>File</MenuItem>
          <MenuItem $w={43}>Edit</MenuItem>
          <MenuItem $w={55}>View</MenuItem>
          <MenuItem $w={84} $track={-0.2}>History</MenuItem>
          <MenuItem $w={132}>Bookmarks</MenuItem>
          <MenuItem $w={94}>Window</MenuItem>
          <MenuItem $w={54}>Help</MenuItem>
        </MenuGroup>
        <StatusGroup>
          <svg width="40" height="27" viewBox="0 0 40 27">
            <path d="M10 9A11 9.500 0 0 1 30 9L33 11L20 18L6 10Z" fill="#fff" fillOpacity=".6" />
            <path d="M6 8A9 9 0 0 1 13 7L24 15L4 26Q0 23 0 17Q1 10 6 8Z" fill="#fff" fillOpacity=".8" />
            <path d="M4 26L28 11Q39 9 40 18Q40 26 32 27H8Q5 27 4 26Z" fill="#fff" fillOpacity=".95" />
          </svg>
          <Gap $w={38} />
          <svg width="28" height="28" viewBox="0 0 28 28">
            <circle cx="14" cy="14" r="12.700" fill="none" stroke="#fff" strokeWidth="2.500" />
            <path d="M10.500 8.500L20 14L10.500 19.500Z" fill="#fff" />
          </svg>
          <Gap $w={36} />
          <svg width="51" height="25" viewBox="0 0 51 25">
            <rect x="1" y="1" width="44" height="23" rx="7" fill="none" stroke="#fff" strokeOpacity=".5" strokeWidth="2" />
            <rect x="4" y="4" width="30" height="17" rx="4" fill="#fff" />
            <path d="M47.500 8.500Q50.500 10 50.500 12.500T47.500 16.500Z" fill="#fff" fillOpacity=".55" />
          </svg>
          <Gap $w={38} />
          <svg width="35" height="26" viewBox="0 0 35 26" fill="none" stroke="#fff" strokeWidth="4.200">
            <path d="M1.800 10A22.500 22.500 0 0 1 33.200 10" />
            <path d="M7.500 16A14.500 14.500 0 0 1 27.500 16" />
            <path d="M11.800 19.500A8.500 8.500 0 0 1 23.200 19.500L17.500 25.500Z" fill="#fff" stroke="none" />
          </svg>
          <Gap $w={38} />
          <svg width="26" height="26" viewBox="0 0 26 26" fill="none" stroke="#fff" strokeWidth="2.600" strokeLinecap="round">
            <circle cx="10.800" cy="10.800" r="9.300" />
            <path d="M17.800 17.800L24.300 24.300" />
          </svg>
          <Gap $w={40} />
          <svg width="28" height="28" viewBox="0 0 28 28">
            <rect x="1.200" y="1.200" width="25.600" height="10.800" rx="5.400" fill="none" stroke="#fff" strokeWidth="2.400" />
            <circle cx="7" cy="6.600" r="3.700" fill="#fff" />
            <rect y="15.500" width="28" height="12.500" rx="6.200" fill="#fff" />
            <circle cx="21" cy="21.700" r="3.900" fill="#7ba9ba" />
          </svg>
          <Gap $w={36} />
          <Clock $w={149} $track={0.2}>Tue Apr 23</Clock>
          <Clock $w={113} $track={0.2}>12:52 PM</Clock>
        </StatusGroup>
      </MenuBar>

      <Browser>
        <Toolbar>
          <Light $c="#ed6a5f" />
          <Light $c="#f5bf4f" />
          <Light $c="#61c654" />
          <Gap $w={36} />
          <svg width="39" height="31" viewBox="0 0 39 31" fill="none" stroke="#b6b7b8" strokeWidth="2.400">
            <rect x="1.200" y="1.200" width="36.600" height="28.600" rx="4.500" />
            <path d="M14.500 1V30M4.500 8H10.500M4.500 12.500H10.500M4.500 17H10.500" strokeWidth="2" />
          </svg>
          <ToolDivider />
          <svg width="15" height="10" viewBox="0 0 15 10" fill="none" stroke="#dededf" strokeWidth="3" strokeLinecap="round" strokeLinejoin="round">
            <path d="M1.800 1.800L7.500 7.800L13.200 1.800" />
          </svg>
          <Gap $w={50} />
          <svg width="17" height="29" viewBox="0 0 17 29" fill="none" stroke="#b9babb" strokeWidth="2.800" strokeLinecap="round" strokeLinejoin="round">
            <path d="M15.300 1.700L2 14.500L15.300 27.300" />
          </svg>
          <Gap $w={55} />
          <svg width="17" height="29" viewBox="0 0 17 29" fill="none" stroke="#5f6062" strokeWidth="2.800" strokeLinecap="round" strokeLinejoin="round">
            <path d="M1.700 1.700L15 14.500L1.700 27.300" />
          </svg>
          <Gap $w={458} />
          <Address>
            <AddressText>10.7.52.253</AddressText>
            <svg width="26" height="29" viewBox="0 0 26 29" fill="none" stroke="#dcdcdd" strokeWidth="2.300" strokeLinecap="round" strokeLinejoin="round">
              <path d="M16 6.700A10.800 10.800 0 1 0 23.800 16.500" />
              <path d="M12 1.300L17.500 6.900L12 12.300" />
            </svg>
          </Address>
          <Spacer />
          <svg width="30" height="38" viewBox="0 0 30 38" fill="none" stroke="#b2b3b4" strokeWidth="2.500" strokeLinecap="round" strokeLinejoin="round">
            <path d="M9.500 12H5A3.600 3.600 0 0 0 1.400 15.600V33A3.600 3.600 0 0 0 5 36.600H25A3.600 3.600 0 0 0 28.600 33V15.600A3.600 3.600 0 0 0 25 12H20.500" />
            <path d="M15 24V2M9.500 7.300L15 1.700L20.500 7.300" />
          </svg>
          <Gap $w={43} />
          <svg width="29" height="29" viewBox="0 0 29 29" stroke="#b2b3b4" strokeWidth="2.600" strokeLinecap="round">
            <path d="M14.500 1.500V27.500M1.500 14.500H27.500" />
          </svg>
          <Gap $w={43} />
          <svg width="36" height="36" viewBox="0 0 36 36" fill="none" stroke="#b2b3b4" strokeWidth="2.500">
            <rect x="9.500" y="9" width="25" height="25.500" rx="4.500" />
            <path d="M9 27H6A4.500 4.500 0 0 1 1.500 22.500V6A4.500 4.500 0 0 1 6 1.500H22A4.500 4.500 0 0 1 26.500 6V8.500" />
          </svg>
        </Toolbar>
        <Tabs>
          <ActiveTab>
            <CountBadge>1</CountBadge>
            Bootstr...
          </ActiveTab>
          {tabOrder.map((name, i) => {
            const Icon = favicons[name];
            return <Tab key={i}><Icon /></Tab>;
          })}
        </Tabs>

        <Navbar>
          <Brand>ECI</Brand>
          <NavLink $w={275}>Purchase Details</NavLink>
          <NavLink $w={300}>Redemption Details</NavLink>
          <Spacer />
          <NavSearch>
            <Input $w={446}>Search</Input>
            <Outline>Search</Outline>
          </NavSearch>
        </Navbar>

        <Intro>
          <Title>Q1: Purchase Details</Title>
          <Questions>
            <Primary $w={91}>Q1</Primary>
            <Primary $w={94}>Q2</Primary>
            <Primary $w={96}>Q5</Primary>
          </Questions>
        </Intro>

        <Filters>
          <FilterRow $n={2}>
            <Field>
              <Input $focus>
                11441
                <Caret />
                <Spacer />
                <svg width="26" height="26" viewBox="0 0 26 26">
                  <circle cx="13" cy="13" r="13" fill="#808080" />
                  <path d="M8.500 8.500L17.500 17.500M17.500 8.500L8.500 17.500" stroke="#fff" strokeWidth="2.400" strokeLinecap="round" />
                </svg>
                <Gap $w={8} />
              </Input>
              <Outline>Search</Outline>
            </Field>
            <Search label="Search by Reference No (URN)" />
          </FilterRow>
          <FilterRow $n={3}>
            <Search label="Filter by Journal Date" />
            <Search label="Filter by Date of Purchase" />
            <Search label="Filter by Date of Expiry" />
          </FilterRow>
          <FilterRow $n={1}>
            <Search label="Search by Name of the Purchaser" />
          </FilterRow>
          <FilterRow $n={2}>
            <Search label="Filter by Prefix" />
            <Search label="Search by Denomination" />
          </FilterRow>
          <FilterRow $n={2}>
            <Search label="Filter by Issue Branch Code" />
            <Search label="Search by Issue Teller" />
          </FilterRow>
        </Filters>

        <Table>
          <thead>
            <tr>
              {columns.map(([name, w, t]) => <Th key={name} $w={w} $track={t}>{name}</Th>)}
            </tr>
          </thead>
          <tbody>
            {rows.map(r => (
              <tr key={r[0]}>
                {r.map((cell, i) => <Td key={i} $track={cellTrack[i]}>{cell}</Td>)}
              </tr>
            ))}
          </tbody>
        </Table>
        <BottomShade />
      </Browser>

      <DockArea>
        <DockBar>
          <DockSlots items={apps} />
          <DockDivider />
          <DockSlots items={recent} />
          <DockDivider />
          <Slot><PaperStack /></Slot>
          <Slot><Trash /></Slot>
        </DockBar>
      </DockArea>
    </Desktop>
  );
}
